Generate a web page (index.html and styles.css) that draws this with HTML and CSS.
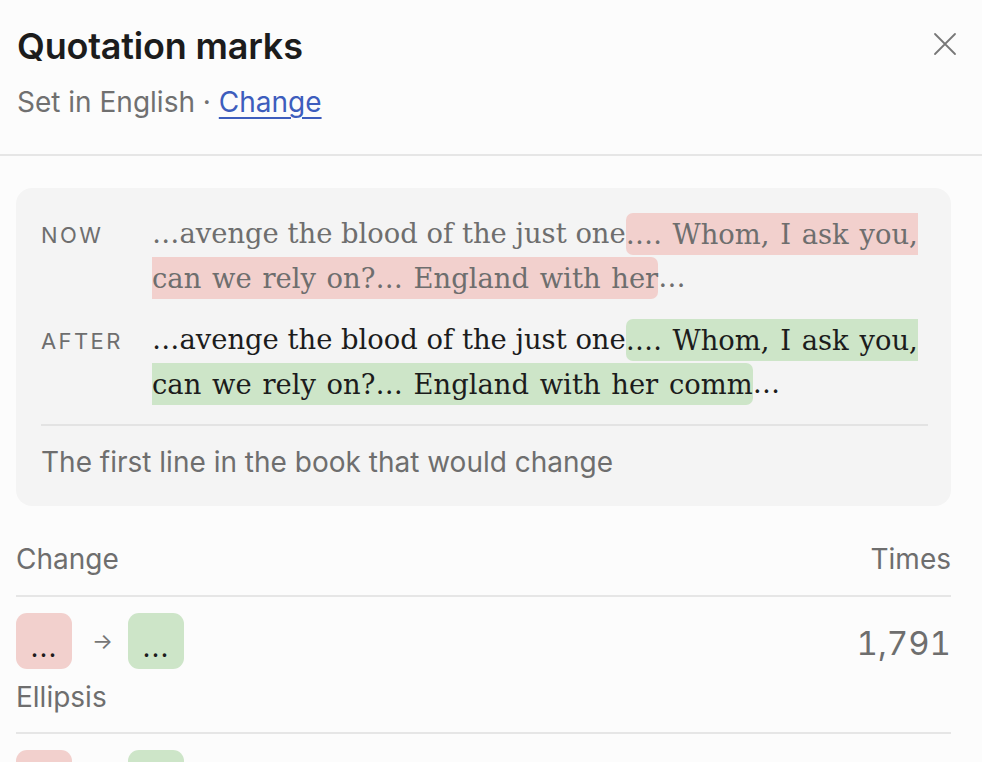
FILE: index.html
```html
<!DOCTYPE html>
<html lang="en">
<head>
<meta charset="utf-8">
<title>Quotation marks</title>
<link rel="stylesheet" href="styles.css">
</head>
<body>
<div class="panel">
  <header class="header">
    <div class="header-text">
      <h1 class="title">Quotation marks</h1>
      <p class="subtitle">Set in English · <a class="link" href="#">Change</a></p>
    </div>
    <button class="close" aria-label="Close">
      <svg width="24" height="24" viewBox="0 0 24 24" fill="none" stroke="currentColor" stroke-width="1.8" stroke-linecap="round"><path d="M2 2 L22 22 M22 2 L2 22"/></svg>
    </button>
  </header>

  <main class="content">
    <section class="preview">
      <div class="compare">
        <div class="label">NOW</div>
        <div class="passage now">…avenge the blood of the just one<span class="hl del">…. Whom, I ask you, can we rely on?… England with her</span>…</div>
        <div class="label">AFTER</div>
        <div class="passage after">…avenge the blood of the just one<span class="hl ins">…. Whom, I ask you, can we rely on?… England with her comm</span>…</div>
      </div>
      <p class="caption">The first line in the book that would change</p>
    </section>

    <div class="table">
      <div class="thead">
        <span>Change</span>
        <span>Times</span>
      </div>
      <div class="row">
        <div class="row-main">
          <div class="pair">
            <span class="chip del">…</span>
            <span class="arrow">→</span>
            <span class="chip ins">…</span>
          </div>
          <span class="count">1,791</span>
        </div>
        <div class="row-name">Ellipsis</div>
      </div>
      <div class="row">
        <div class="row-main">
          <div class="pair">
            <span class="chip del">"</span>
            <span class="arrow">→</span>
            <span class="chip ins">“</span>
          </div>
          <span class="count">1,204</span>
        </div>
        <div class="row-name">Opening quote</div>
      </div>
    </div>
  </main>
</div>
</body>
</html>
```

FILE: styles.css
```css
* { box-sizing: border-box; }

html, body {
  margin: 0;
  padding: 0;
  background: #fcfcfc;
  color: #1c1c1c;
  font-family: Inter, "Noto Sans", "Liberation Sans", sans-serif;
}

body { overflow: hidden; height: 762px; }

.panel { width: 982px; }

.header {
  display: flex;
  justify-content: space-between;
  align-items: flex-start;
  padding: 24px 25px 34px 17px;
  border-bottom: 2px solid #e6e6e6;
}

.title {
  margin: 0;
  font-size: 36px;
  line-height: 44px;
  font-weight: 600;
  color: #1c1c1c;
  letter-spacing: -0.2px;
}

.subtitle {
  margin: 16px 0 0;
  font-size: 28px;
  line-height: 36px;
  color: #707070;
}

.link {
  color: #3d5dbd;
  text-decoration: underline;
  text-underline-offset: 5px;
  text-decoration-thickness: 2px;
}

.close {
  margin-top: 8px;
  padding: 0;
  border: 0;
  background: none;
  color: #777;
  width: 24px;
  height: 24px;
  display: flex;
}

.content { padding: 32px 31px 0 16px; }

.preview {
  background: #f4f4f4;
  border-radius: 16px;
  padding: 24px 23px 26px 25px;
}

.compare {
  display: grid;
  grid-template-columns: 111px 1fr;
  align-items: baseline;
  row-gap: 18px;
  padding-bottom: 18px;
  border-bottom: 2px solid #e3e3e3;
}

.label {
  font-size: 22px;
  line-height: 44px;
  letter-spacing: 2.4px;
  color: #6e6e6e;
}

.passage {
  font-family: "DejaVu Serif", "Liberation Serif", serif;
  font-size: 27.4px;
  line-height: 44px;
}

.passage.now { color: #6e6e6e; }
.passage.after { color: #1c1c1c; }

.hl {
  padding: 5.5px 0;
  border-radius: 7px;
  word-spacing: 2px;
}

.del { background: #f2d0cd; }
.ins { background: #cde5c8; }

.caption {
  margin: 0;
  padding-top: 18px;
  font-size: 28px;
  line-height: 36px;
  color: #6e6e6e;
}

.thead {
  display: flex;
  justify-content: space-between;
  margin-top: 36px;
  padding-bottom: 19px;
  border-bottom: 2px solid #e6e6e6;
  font-size: 28px;
  line-height: 34px;
  color: #6e6e6e;
}

.row {
  padding: 16px 0 18px;
  border-bottom: 2px solid #e6e6e6;
}

.row-main {
  display: flex;
  justify-content: space-between;
  align-items: center;
}

.pair {
  display: flex;
  align-items: center;
  gap: 20px;
}

.chip {
  width: 56px;
  height: 56px;
  border-radius: 11px;
  display: flex;
  align-items: center;
  justify-content: center;
  padding-top: 14px;
  font-family: "DejaVu Serif", "Liberation Serif", serif;
  font-size: 27px;
  line-height: 40px;
  letter-spacing: 1px;
  color: #1c1c1c;
}

.arrow {
  font-size: 22px;
  color: #777;
  width: 16px;
  text-align: center;
}

.count {
  font-size: 33px;
  line-height: 40px;
  color: #6e6e6e;
  font-variant-numeric: tabular-nums;
  padding-top: 3px;
}

.row-name {
  margin-top: 11px;
  font-size: 28px;
  line-height: 34px;
  color: #6e6e6e;
}
```
